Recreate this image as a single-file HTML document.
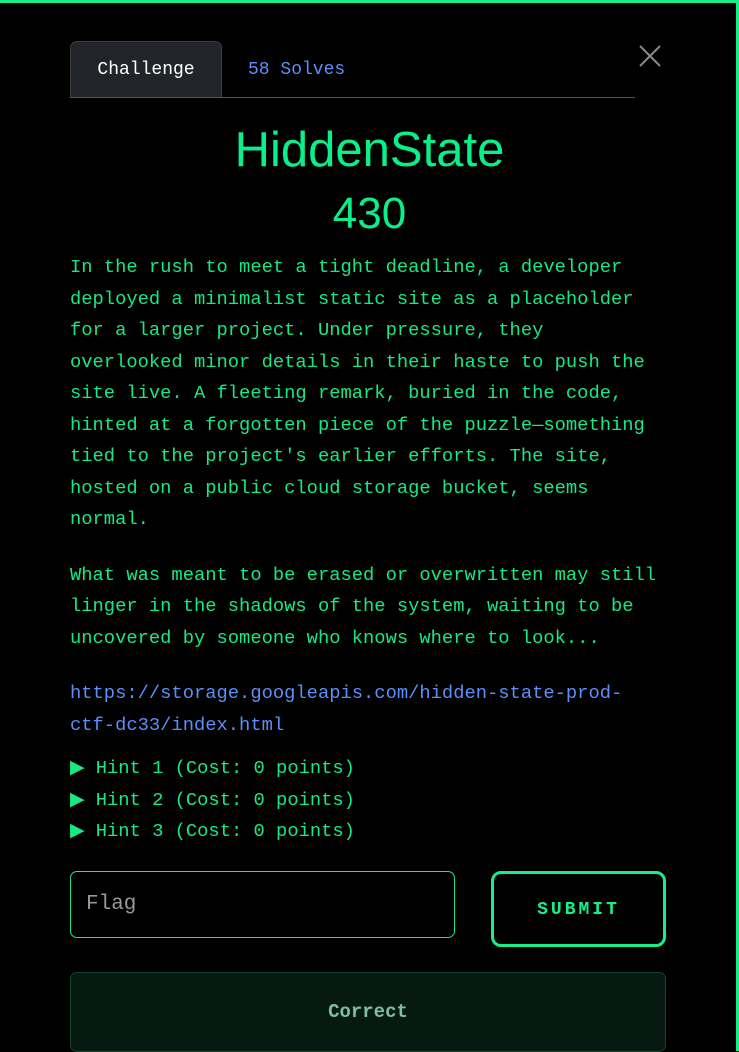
<!DOCTYPE html>
<html><head><meta charset="utf-8"><style>
*{margin:0;padding:0;box-sizing:border-box}
body{width:739px;height:1051px;background:#000;overflow:hidden;position:relative;font-family:"Liberation Mono",monospace;color:#17e882}
.top{position:absolute;left:0;top:0;width:739px;height:3px;background:#17f08a}
.right{position:absolute;right:0;top:0;width:3px;height:1051px;background:#17f08a}
.tabline{position:absolute;left:70px;top:97px;width:565px;height:1px;background:#555}
.tab{position:absolute;left:70px;top:41px;width:152px;height:57px;background:#212429;border:1px solid #3a3d42;border-bottom:none;border-radius:7px 7px 0 0;color:#fff;font-size:18px;text-align:center;line-height:56px}
.solves{position:absolute;left:248px;top:42px;line-height:56px;font-size:18px;color:#5b8ff9}
.x{position:absolute;left:638px;top:44px}
h1{position:absolute;left:0;width:739px;top:122px;text-align:center;font-family:"Liberation Sans",sans-serif;font-weight:normal;font-size:49px;color:#08f08a}
.pts{position:absolute;left:0;width:739px;top:189px;text-align:center;font-family:"Liberation Sans",sans-serif;font-size:44px;color:#08f08a}
.desc{position:absolute;left:70px;top:252px;width:610px;font-size:18.8px;line-height:31.5px;white-space:pre}
.link{color:#5b8ff9}
.flag{position:absolute;left:70px;top:871px;width:385px;height:67px;border:1px solid #17e882;border-radius:7px;color:#999;font-size:21px;padding:21px 15px}
.sub{position:absolute;left:491px;top:871px;width:175px;height:76px;border:3px solid #17f08a;border-radius:10px;text-align:center;line-height:72px;font-weight:bold;font-size:18px;letter-spacing:3px;color:#17f08a}
.ok{position:absolute;left:70px;top:972px;width:596px;height:80px;background:#061a12;border:1px solid #10472c;border-radius:7px;text-align:center;line-height:78px;color:#7fbf9f;font-size:19px;font-weight:bold}
</style></head><body>
<div class="top"></div><div class="right"></div>
<div class="tab">Challenge</div>
<div class="solves">58 Solves</div>
<div class="tabline"></div>
<svg class="x" width="24" height="24" viewBox="0 0 24 24"><path d="M2 2L22 22M22 2L2 22" stroke="#888" stroke-width="2"/></svg>
<h1>HiddenState</h1>
<div class="pts">430</div>
<div class="desc">In the rush to meet a tight deadline, a developer
deployed a minimalist static site as a placeholder
for a larger project. Under pressure, they
overlooked minor details in their haste to push the
site live. A fleeting remark, buried in the code,
hinted at a forgotten piece of the puzzle—something
tied to the project's earlier efforts. The site,
hosted on a public cloud storage bucket, seems
normal.
<span style="display:block;height:24px"></span>What was meant to be erased or overwritten may still
linger in the shadows of the system, waiting to be
uncovered by someone who knows where to look...
<span style="display:block;height:24px"></span><span class="link">https://storage.googleapis.com/hidden-state-prod-
ctf-dc33/index.html</span>
<span style="display:block;height:12px"></span>▶ Hint 1 (Cost: 0 points)
▶ Hint 2 (Cost: 0 points)
▶ Hint 3 (Cost: 0 points)</div>
<div class="flag">Flag</div>
<div class="sub">SUBMIT</div>
<div class="ok">Correct</div>
</body></html>
